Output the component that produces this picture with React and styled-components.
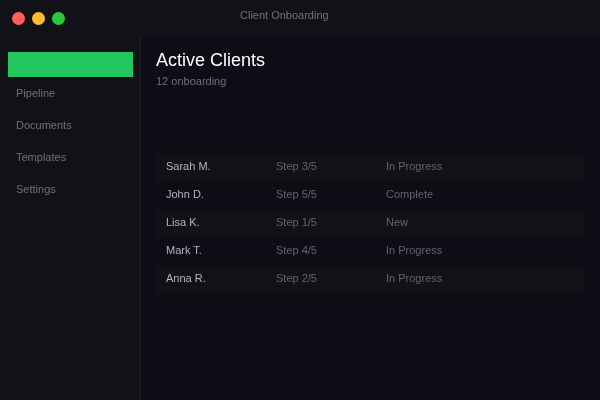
import React from "react";
import styled, { createGlobalStyle } from "styled-components";

const clients = [
  { name: "Sarah M.", step: "Step 3/5", status: "In Progress" },
  { name: "John D.", step: "Step 5/5", status: "Complete" },
  { name: "Lisa K.", step: "Step 1/5", status: "New" },
  { name: "Mark T.", step: "Step 4/5", status: "In Progress" },
  { name: "Anna R.", step: "Step 2/5", status: "In Progress" },
];

const navItems = ["Pipeline", "Documents", "Templates", "Settings"];

export default function App() {
  return (
    <Window>
      <GlobalStyle />
      <TitleBar>
        <Lights>
          <Light color="#ff5f56" />
          <Light color="#ffbd2e" />
          <Light color="#27c93f" />
        </Lights>
        <WindowTitle>Client Onboarding</WindowTitle>
      </TitleBar>
      <Body>
        <Sidebar>
          <ActiveItem />
          {navItems.map((item) => (
            <NavItem key={item}>{item}</NavItem>
          ))}
        </Sidebar>
        <Main>
          <Heading>Active Clients</Heading>
          <Subheading>12 onboarding</Subheading>
          <Table>
            {clients.map((client) => (
              <Row key={client.name}>
                <Name>{client.name}</Name>
                <Cell>{client.step}</Cell>
                <Cell>{client.status}</Cell>
              </Row>
            ))}
          </Table>
        </Main>
      </Body>
    </Window>
  );
}

const GlobalStyle = createGlobalStyle`
  html, body {
    margin: 0;
    background: #0c0d15;
  }
`;

const Window = styled.div`
  width: 600px;
  height: 400px;
  display: flex;
  flex-direction: column;
  overflow: hidden;
  background: #0c0d15;
  font-family: "Liberation Sans", Arial, sans-serif;
  will-change: transform;
`;

const TitleBar = styled.div`
  height: 36px;
  flex-shrink: 0;
  padding-left: 12px;
  display: flex;
  align-items: center;
  background: #111218;
`;

const Lights = styled.div`
  display: flex;
  gap: 7px;
`;

const Light = styled.span`
  width: 13px;
  height: 13px;
  border-radius: 50%;
  background: ${(props) => props.color};
`;

const WindowTitle = styled.span`
  margin: 0 0 6px 175px;
  font-size: 11px;
  color: #6e6f79;
`;

const Body = styled.div`
  flex: 1;
  display: flex;
  min-height: 0;
`;

const Sidebar = styled.nav`
  width: 141px;
  flex-shrink: 0;
  padding: 16px 7px 0 8px;
  box-sizing: border-box;
  display: flex;
  flex-direction: column;
  background: #111218;
  border-right: 1px solid #1c1d24;
`;

const ActiveItem = styled.div`
  height: 25px;
  background: #22c55e;
`;

const NavItem = styled.div`
  height: 32px;
  padding-left: 8px;
  display: flex;
  align-items: center;
  font-size: 11px;
  color: #6e6f79;
`;

const Main = styled.main`
  flex: 1;
  min-width: 0;
  padding: 12px 15px 0;
  display: flex;
  flex-direction: column;
`;

const Heading = styled.h1`
  margin: 0;
  font-size: 18px;
  line-height: 24px;
  font-weight: 400;
  color: #ffffff;
`;

const Subheading = styled.div`
  margin-top: 1px;
  font-size: 11px;
  line-height: 16px;
  color: #6e6f79;
`;

const Table = styled.div`
  margin-top: 65px;
  display: flex;
  flex-direction: column;
`;

const Row = styled.div`
  height: 28px;
  box-sizing: border-box;
  padding: 6px 0 0 10px;
  display: grid;
  grid-template-columns: 110px 110px 1fr;
  align-items: start;
  &:nth-child(odd) {
    background: #111217;
  }
`;

const Cell = styled.span`
  font-size: 11px;
  line-height: 12px;
  color: #62636d;
`;

const Name = styled(Cell)`
  color: #b4b5ba;
`;
